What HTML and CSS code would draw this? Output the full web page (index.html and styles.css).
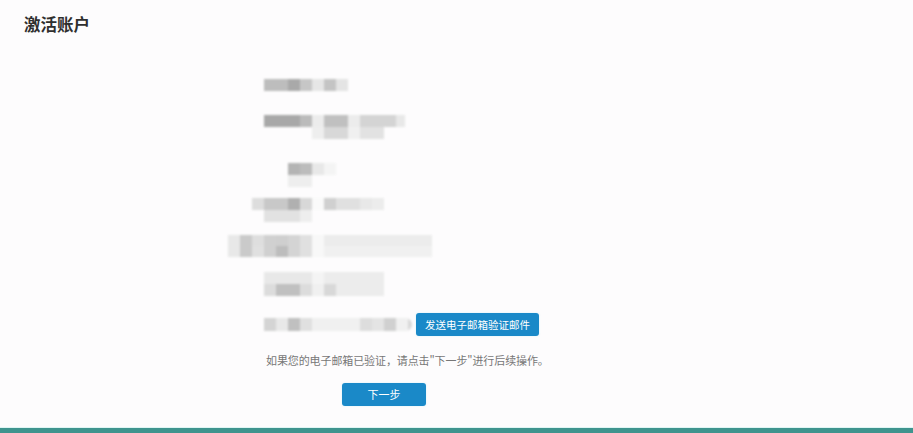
FILE: index.html
```html
<!DOCTYPE html>
<html lang="zh-CN">
<head>
<meta charset="utf-8">
<title>激活账户</title>
<link rel="stylesheet" href="styles.css">
</head>
<body>
<header class="page-header">
  <h1 class="page-title">激活账户</h1>
</header>
<main class="activate">
  <div class="mosaic m1"></div>
  <div class="mosaic m2"></div>
  <div class="mosaic m3"></div>
  <div class="mosaic m4"></div>
  <div class="mosaic m5"></div>
  <div class="mosaic m6"></div>
  <div class="email-row">
    <div class="mosaic m7"></div>
    <button class="btn btn-send" type="button">发送电子邮箱验证邮件</button>
  </div>
  <p class="note">如果您的电子邮箱已验证，请点击"下一步"进行后续操作。</p>
  <button class="btn btn-next" type="button">下一步</button>
</main>
<footer class="page-footer"></footer>
</body>
</html>
```

FILE: styles.css
```css
html, body {
  margin: 0;
  padding: 0;
}
body {
  min-height: 100vh;
  display: flex;
  flex-direction: column;
  background: #fdfcfd;
  font-family: "Noto Sans CJK SC", "Noto Sans", "Liberation Sans", sans-serif;
  color: #333;
}
.page-header {
  padding: 14px 24px 0;
  height: 20px;
}
.page-title {
  margin: 0;
  font-size: 16.5px;
  line-height: 20px;
  font-weight: 700;
  color: #2f2f2f;
}
.activate {
  flex: 1;
  display: flex;
  flex-direction: column;
  align-items: flex-start;
  padding: 45px 0 0 228px;
}
.mosaic {
  width: 204px;
  filter: blur(1px);
}
.m1 {
  height: 12px;
  background: linear-gradient(to right,
    transparent 0 36px, #bdbdbd 36px 60px, #a9a9a9 60px 72px, #c6c6c6 72px 84px,
    #e6e6e6 84px 96px, #c4c4c4 96px 108px, #e4e4e4 108px 120px, transparent 120px);
}
.m2 {
  margin-top: 24px;
  height: 24px;
  background:
    linear-gradient(to right,
      transparent 0 36px, #a8a8a8 36px 72px, #bbbbbb 72px 84px, #ececec 84px 96px,
      #c0c0c0 96px 120px, #ececec 120px 132px, #d4d4d4 132px 168px, #e8e8e8 168px 177px,
      transparent 177px) top / 100% 12px no-repeat,
    linear-gradient(to right,
      transparent 0 84px, #eeeeee 84px 96px, #d8d8d8 96px 120px, #f0f0f0 120px 132px,
      #e2e2e2 132px 156px, transparent 156px) bottom / 100% 12px no-repeat;
}
.m3 {
  margin-top: 24px;
  height: 24px;
  background:
    linear-gradient(to right,
      transparent 0 60px, #b4b4b4 60px 72px, #bcbcbc 72px 84px, #e8e8e8 84px 96px,
      #f4f4f4 96px 108px, transparent 108px) top / 100% 12px no-repeat,
    linear-gradient(to right,
      transparent 0 60px, #eeeeee 60px 84px, transparent 84px) bottom / 100% 12px no-repeat;
}
.m4 {
  margin-top: 11px;
  height: 24px;
  background:
    linear-gradient(to right,
      transparent 0 24px, #dddddd 24px 36px, #c8c8c8 36px 60px, #b0b0b0 60px 72px,
      #d8d8d8 72px 84px, #fafafa 84px 96px, #d0d0d0 96px 108px, #e0e0e0 108px 132px,
      #e8e8e8 132px 144px, #ececec 144px 156px, transparent 156px) top / 100% 12px no-repeat,
    linear-gradient(to right,
      transparent 0 36px, #e2e2e2 36px 72px, #eeeeee 72px 84px, transparent 84px) bottom / 100% 12px no-repeat;
}
.m5 {
  margin-top: 13px;
  height: 22px;
  background:
    linear-gradient(to right,
      #e8e8e8 0 12px, #cacaca 12px 24px, #dedede 24px 36px, #d0d0d0 36px 48px,
      #cfcfcf 48px 60px, #d4d4d4 60px 72px, #e0e0e0 72px 84px, #f8f8f8 84px 96px,
      #ececec 96px 204px) top / 100% 11px no-repeat,
    linear-gradient(to right,
      #e8e8e8 0 12px, #cacaca 12px 24px, #e0e0e0 24px 36px, #d0d0d0 36px 48px,
      #bdbdbd 48px 60px, #d4d4d4 60px 72px, #e0e0e0 72px 84px, #f8f8f8 84px 96px,
      #f0f0f0 96px 204px) bottom / 100% 11px no-repeat;
}
.m6 {
  margin-top: 15px;
  height: 24px;
  background:
    linear-gradient(to right,
      transparent 0 36px, #e8e8e8 36px 84px, #f4f4f4 84px 96px, #ececec 96px 156px,
      transparent 156px) top / 100% 12px no-repeat,
    linear-gradient(to right,
      transparent 0 36px, #dcdcdc 36px 48px, #c0c0c0 48px 72px, #dcdcdc 72px 84px,
      #f0f0f0 84px 96px, #d8d8d8 96px 108px, #ececec 108px 156px, transparent 156px) bottom / 100% 12px no-repeat;
}
.email-row {
  margin: 17px 0 0 36px;
  display: flex;
  align-items: center;
  gap: 4px;
}
.m7 {
  width: 148px;
  height: 13px;
  border-radius: 0 7px 7px 0;
  background: linear-gradient(to right,
    #d4d4d4 0 12px, #e8e8e8 12px 24px, #c0c0c0 24px 36px, #e0e0e0 36px 48px,
    #f0f0f0 48px 96px, #dddddd 96px 108px, #e4e4e4 108px 120px, #d0d0d0 120px 132px,
    #f0f0f0 132px 144px, #d8d8d8 144px 148px);
}
.btn {
  height: 23px;
  padding: 0;
  border: 0;
  border-radius: 3px;
  background: #1a89c8;
  color: #fff;
  font-family: inherit;
  font-size: 11px;
  line-height: 23px;
  text-align: center;
  box-shadow: 0 0 2px rgba(120, 220, 240, 0.35);
}
.btn-send {
  width: 123px;
  font-size: 10.5px;
}
.note {
  margin: 17px 0 0 38px;
  font-size: 11px;
  line-height: 14px;
  color: #777;
  letter-spacing: -0.1px;
}
.btn-next {
  margin: 16px 0 0 114px;
  width: 84px;
}
.page-footer {
  height: 5px;
  border-top: 1px solid #dff5f4;
  background: #3f948e;
}
```
